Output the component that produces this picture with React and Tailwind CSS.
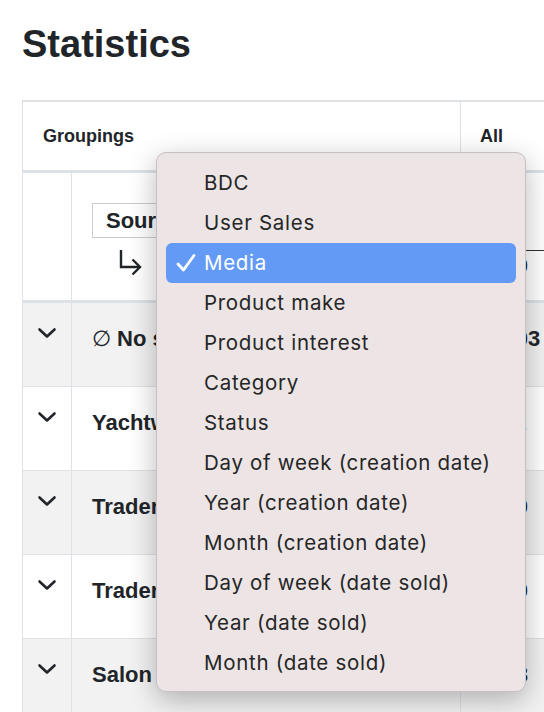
import React from "react";

const menuItems = [
  "BDC",
  "User Sales",
  "Media",
  "Product make",
  "Product interest",
  "Category",
  "Status",
  "Day of week (creation date)",
  "Year (creation date)",
  "Month (creation date)",
  "Day of week (date sold)",
  "Year (date sold)",
  "Month (date sold)",
];

const rows = [
  { label: "No source", empty: true, total: "12,403" },
  { label: "Yachtworld", total: "8,112" },
  { label: "Trader Online", total: "6,230" },
  { label: "Trader Print", total: "12,40" },
  { label: "Salon nautique", total: "3,018" },
];

function Chevron() {
  return (
    <svg width="20" height="12" viewBox="0 0 20 12" fill="none">
      <polyline points="2.5,2.5 10,9.5 17.5,2.5" stroke="#212529" strokeWidth="2.6" strokeLinecap="round" strokeLinejoin="round" />
    </svg>
  );
}

function SubArrow() {
  return (
    <svg width="26" height="28" viewBox="0 0 26 28" fill="none">
      <path d="M3 1 V18 H22" stroke="#212529" strokeWidth="2.4" />
      <path d="M14.5 10.5 L22 18 L14.5 25.5" stroke="#212529" strokeWidth="2.4" />
    </svg>
  );
}

function Check() {
  return (
    <svg width="22" height="22" viewBox="0 0 22 22" fill="none">
      <path d="M3 12 L8.5 18 L19 3.5" stroke="white" strokeWidth="2.8" strokeLinecap="round" strokeLinejoin="round" />
    </svg>
  );
}

export default function App() {
  const selected = "Media";

  return (
    <div className="relative w-[544px] h-[712px] overflow-hidden bg-white text-[#212529] font-['Liberation_Sans',Arial,sans-serif]">
      <h1 className="pt-[25px] pl-[22px] text-[38px] leading-none font-bold">Statistics</h1>

      {/* ── Table ── */}
      <div className="mt-[37px] ml-[22px] w-[720px] border-t-2 border-l border-[#dee2e6]">
        {/* header: groupings */}
        <div className="flex h-[71px] border-b-[3px] border-[#dee2e6] text-[18px] font-bold">
          <div className="w-[437px] flex items-center pl-[20px]">Groupings</div>
          <div className="flex-1 flex items-center pl-[19px] border-l border-[#dee2e6]">All</div>
        </div>

        {/* header: selected grouping */}
        <div className="flex h-[130px] border-b-[3px] border-[#dee2e6]">
          <div className="w-[49px] border-r border-[#dee2e6]" />
          <div className="w-[388px] pl-[20px] pt-[30px]">
            <div className="h-[35px] w-[240px] border border-[#cccccc] flex items-center px-[13px] text-[22px] font-bold">
              Source
            </div>
            <div className="pl-[26px] pt-[11px]">
              <SubArrow />
            </div>
          </div>
          <div className="flex-1 border-l border-[#dee2e6] pt-[77px] pl-[6px]">
            <div className="border-t border-[#333] pl-[6px] pt-[2px] text-[22px] leading-[26px] font-bold">12,40</div>
          </div>
        </div>

        {/* body rows */}
        {rows.map((r, i) => (
          <div
            key={r.label}
            className={`flex h-[84px] border-b border-[#dee2e6] ${i % 2 === 0 ? "bg-[#f2f2f2]" : "bg-white"}`}
          >
            <div className="w-[49px] border-r border-[#dee2e6] flex justify-center pt-[24px]">
              <Chevron />
            </div>
            <div className="w-[388px] pl-[20px] pt-[23px] text-[22px] leading-[26px] font-bold">
              {r.empty ? (
                <span>
                  <span className="font-normal">∅</span> No source
                </span>
              ) : (
                r.label
              )}
            </div>
            <div className="flex-1 border-l border-[#dee2e6] pl-[12px] pt-[23px] text-[22px] leading-[26px] font-bold">
              {r.total}
            </div>
          </div>
        ))}
      </div>

      {/* ── Grouping dropdown ── */}
      <div className="absolute left-[156px] top-[152px] w-[370px] h-[540px] rounded-[10px] bg-[#ede5e5] border border-[#c7c0c0] shadow-[0_8px_28px_rgba(0,0,0,0.28)] pt-[10px] font-['Inter','Noto_Sans',sans-serif] text-[20.5px] tracking-[0.7px] text-[#262626]">
        {menuItems.map((item) => {
          const active = item === selected;
          return (
            <div
              key={item}
              className={`mx-[9px] h-[40px] flex items-center rounded-[6px] ${active ? "bg-[#629af5] text-white" : ""}`}
            >
              <div className="w-[38px] flex justify-center pl-[2px]">{active && <Check />}</div>
              <span className="leading-none">{item}</span>
            </div>
          );
        })}
      </div>
    </div>
  );
}
